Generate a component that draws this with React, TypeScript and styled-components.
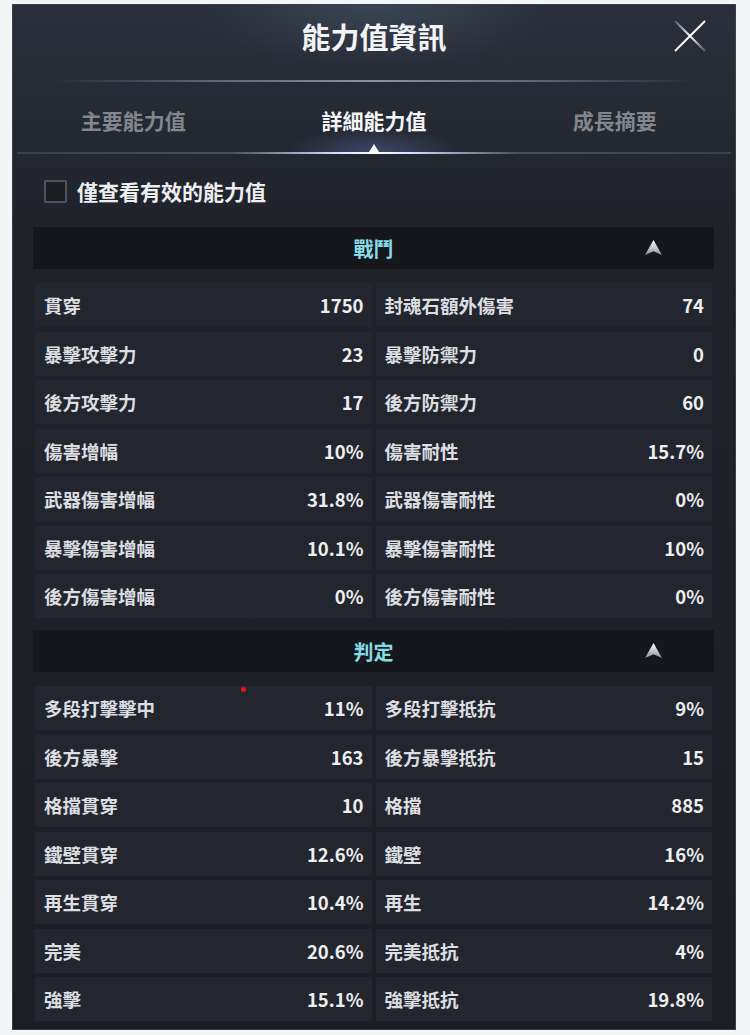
import React from 'react'
import styled, { createGlobalStyle } from 'styled-components'

const GlobalStyle = createGlobalStyle`
  html, body {
    margin: 0;
    padding: 0;
    background: #f4f5f6;
  }
  body {
    font-family: "Noto Sans CJK TC", "Noto Sans", sans-serif;
  }
`

interface Stat {
  label: string
  value: string
}

interface Section {
  title: string
  rows: [Stat, Stat][]
}

const sections: Section[] = [
  {
    title: '戰鬥',
    rows: [
      [{ label: '貫穿', value: '1750' }, { label: '封魂石額外傷害', value: '74' }],
      [{ label: '暴擊攻擊力', value: '23' }, { label: '暴擊防禦力', value: '0' }],
      [{ label: '後方攻擊力', value: '17' }, { label: '後方防禦力', value: '60' }],
      [{ label: '傷害增幅', value: '10%' }, { label: '傷害耐性', value: '15.7%' }],
      [{ label: '武器傷害增幅', value: '31.8%' }, { label: '武器傷害耐性', value: '0%' }],
      [{ label: '暴擊傷害增幅', value: '10.1%' }, { label: '暴擊傷害耐性', value: '10%' }],
      [{ label: '後方傷害增幅', value: '0%' }, { label: '後方傷害耐性', value: '0%' }]
    ]
  },
  {
    title: '判定',
    rows: [
      [{ label: '多段打擊擊中', value: '11%' }, { label: '多段打擊抵抗', value: '9%' }],
      [{ label: '後方暴擊', value: '163' }, { label: '後方暴擊抵抗', value: '15' }],
      [{ label: '格擋貫穿', value: '10' }, { label: '格擋', value: '885' }],
      [{ label: '鐵壁貫穿', value: '12.6%' }, { label: '鐵壁', value: '16%' }],
      [{ label: '再生貫穿', value: '10.4%' }, { label: '再生', value: '14.2%' }],
      [{ label: '完美', value: '20.6%' }, { label: '完美抵抗', value: '4%' }],
      [{ label: '強擊', value: '15.1%' }, { label: '強擊抵抗', value: '19.8%' }]
    ]
  }
]

const tabs = ['主要能力值', '詳細能力值', '成長摘要']

const CloseIcon = () => (
  <svg width="34" height="34" viewBox="0 0 34 34">
    <defs>
      <linearGradient id="xg" x1="0" y1="0" x2="1" y2="1">
        <stop offset="0" stopColor="#ffffff" stopOpacity="0.2" />
        <stop offset="0.5" stopColor="#ffffff" stopOpacity="1" />
        <stop offset="1" stopColor="#ffffff" stopOpacity="0.2" />
      </linearGradient>
    </defs>
    <path d="M2 2 L32 32 M32 2 L2 32" stroke="url(#xg)" strokeWidth="2" />
  </svg>
)

const ArrowUp = () => (
  <svg width="17" height="16" viewBox="0 0 18 17">
    <defs>
      <linearGradient id="ag" x1="0" y1="0" x2="0" y2="1">
        <stop offset="0" stopColor="#ffffff" />
        <stop offset="1" stopColor="#8e9197" />
      </linearGradient>
    </defs>
    <path d="M9 0 L18 16 L9 12 L0 16 Z" fill="url(#ag)" />
  </svg>
)

export default function App() {
  return (
    <Page>
      <GlobalStyle />
      <Panel>
        <Header>
          <span />
          <Title>能力值資訊</Title>
          <CloseButton>
            <CloseIcon />
          </CloseButton>
        </Header>
        <Divider />
        <Tabs>
          {tabs.map((t, i) => (
            <Tab key={t} active={i === 1}>
              {t}
            </Tab>
          ))}
        </Tabs>
        <TabLine>
          <ActiveMark />
        </TabLine>
        <Content>
          <FilterRow>
            <Checkbox />
            <FilterLabel>僅查看有效的能力值</FilterLabel>
          </FilterRow>
          {sections.map((s, si) => (
            <SectionBlock key={s.title}>
              <SectionHeader>
                <span />
                <SectionTitle>{s.title}</SectionTitle>
                <ArrowWrap>
                  <ArrowUp />
                </ArrowWrap>
              </SectionHeader>
              <Grid>
                {s.rows.map((pair, ri) =>
                  pair.map((stat, ci) => (
                    <Cell key={`${ri}-${ci}`}>
                      {si === 1 && ri === 0 && ci === 0 && <RedDot />}
                      <Label>{stat.label}</Label>
                      <Value>{stat.value}</Value>
                    </Cell>
                  ))
                )}
              </Grid>
            </SectionBlock>
          ))}
        </Content>
      </Panel>
    </Page>
  )
}

const Page = styled.div`
  padding: 4px 14px 5px 12px;
  width: 750px;
  box-sizing: border-box;
`

const Panel = styled.div`
  width: 724px;
  height: 1026px;
  box-sizing: border-box;
  border: 1px solid #3a3e47;
  background:
    radial-gradient(ellipse 260px 90px at 50% 0%, rgba(120, 150, 170, 0.22), transparent 70%),
    linear-gradient(180deg, #2a2f3b 0%, #262a34 10%, #1f2229 22%, #1c1e24 100%);
  overflow: hidden;
`

const Header = styled.div`
  height: 75px;
  box-sizing: border-box;
  padding-bottom: 14px;
  display: grid;
  grid-template-columns: 1fr auto 1fr;
  align-items: center;
`

const Title = styled.h1`
  margin: 0;
  font-size: 29px;
  font-weight: 700;
  color: #f2f3f5;
  letter-spacing: 0;
`

const CloseButton = styled.div`
  justify-self: end;
  margin-right: 28px;
  display: flex;
`

const Divider = styled.div`
  height: 2px;
  margin: 0 40px;
  background: linear-gradient(
    90deg,
    transparent 0%,
    rgba(150, 160, 175, 0.5) 25%,
    rgba(170, 180, 195, 0.75) 50%,
    rgba(150, 160, 175, 0.5) 75%,
    transparent 100%
  );
`

const Tabs = styled.div`
  display: grid;
  grid-template-columns: repeat(3, 1fr);
  height: 70px;
  align-items: center;
  background: radial-gradient(ellipse 110px 30px at 50% 100%, rgba(110, 130, 210, 0.35), transparent 80%);
`

const Tab = styled.div<{ active?: boolean }>`
  text-align: center;
  font-size: 21px;
  font-weight: 700;
  color: ${(p) => (p.active ? '#f4f5f7' : '#82868d')};
  padding-top: 5px;
`

const TabLine = styled.div`
  position: relative;
  height: 2px;
  margin: 0 4px;
  background: linear-gradient(
    90deg,
    #3c4049 0%,
    #4a4e57 30%,
    #d8e0ff 45%,
    #ffffff 50%,
    #d8e0ff 55%,
    #4a4e57 70%,
    #3c4049 100%
  );
`

const ActiveMark = styled.div`
  position: absolute;
  left: 50%;
  bottom: 2px;
  transform: translateX(-50%);
  width: 0;
  height: 0;
  border-left: 5px solid transparent;
  border-right: 5px solid transparent;
  border-bottom: 8px solid #ffffff;
`

const Content = styled.div`
  padding: 24px 21px 0 20px;
`

const FilterRow = styled.div`
  display: flex;
  align-items: center;
  gap: 10px;
  padding-left: 11px;
  height: 26px;
`

const Checkbox = styled.div`
  width: 19px;
  height: 19px;
  border: 2px solid #4d525b;
  border-radius: 2px;
  background: #1a1d22;
`

const FilterLabel = styled.span`
  font-size: 21px;
  font-weight: 700;
  color: #eceef0;
`

const SectionBlock = styled.div`
  margin-top: 23px;
  & + & {
    margin-top: 12px;
  }
`

const SectionHeader = styled.div`
  height: 42px;
  background: #15171c;
  display: grid;
  grid-template-columns: 1fr auto 1fr;
  align-items: center;
`

const SectionTitle = styled.div`
  font-size: 20px;
  font-weight: 700;
  color: #86dce4;
`

const ArrowWrap = styled.div`
  justify-self: end;
  margin-right: 52px;
  display: flex;
`

const Grid = styled.div`
  display: grid;
  grid-template-columns: 1fr 1fr;
  grid-auto-rows: 44px;
  column-gap: 4px;
  row-gap: 4.5px;
  margin: 14px 2px 0 2px;
`

const Cell = styled.div`
  position: relative;
  display: flex;
  align-items: center;
  justify-content: space-between;
  padding: 0 8px 0 9px;
  background: #23262e;
`

const Label = styled.span`
  font-size: 18.5px;
  font-weight: 700;
  color: #dcdee1;
`

const Value = styled.span`
  font-size: 18.5px;
  font-weight: 700;
  color: #eceef0;
`

const RedDot = styled.span`
  position: absolute;
  left: 206px;
  top: 1px;
  width: 5px;
  height: 5px;
  border-radius: 50%;
  background: #e8141c;
`
